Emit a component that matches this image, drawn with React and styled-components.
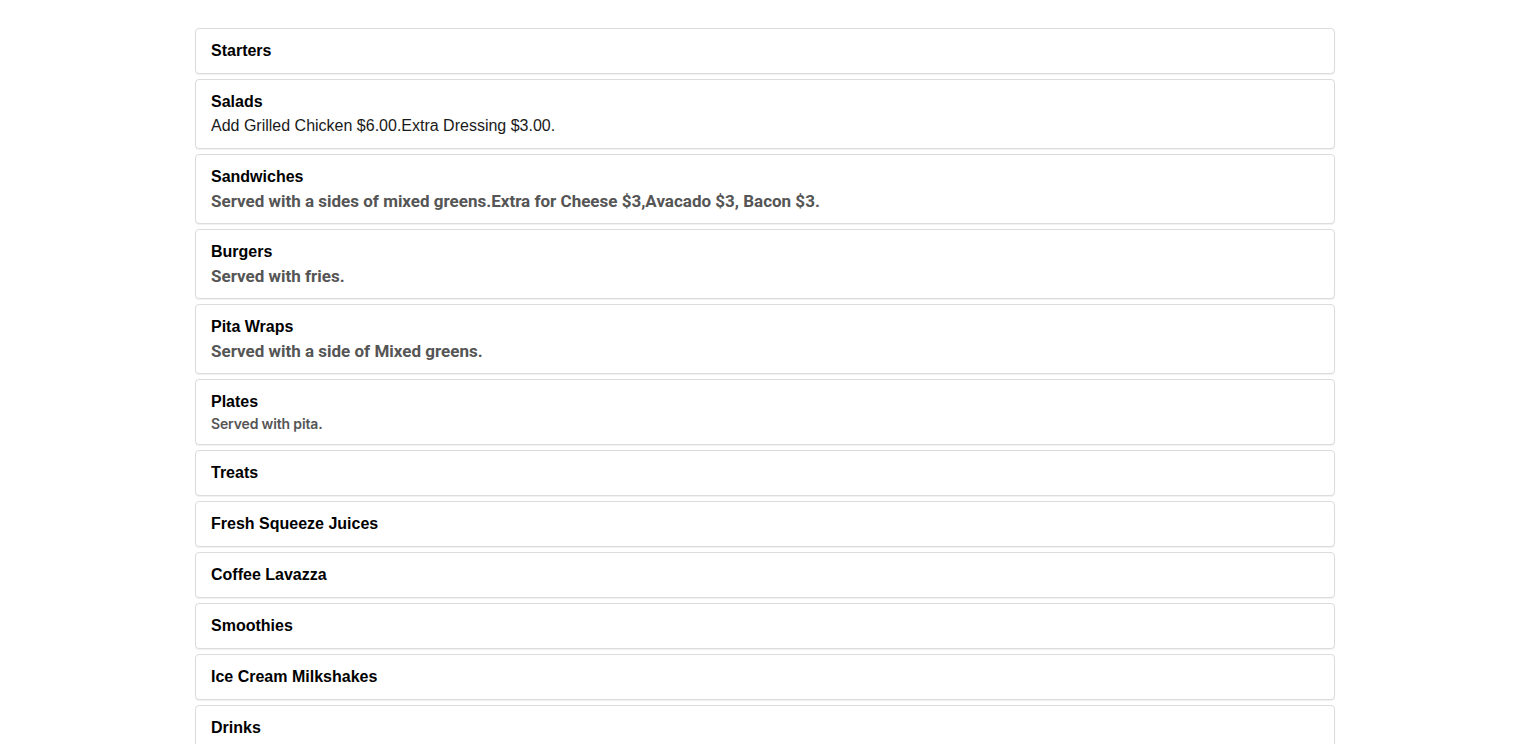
import React from "react";
import styled, { createGlobalStyle } from "styled-components";

const GlobalStyle = createGlobalStyle`
  body {
    margin: 0;
    background: #fff;
    font-family: "Liberation Sans", Arial, sans-serif;
    color: #000;
  }
`;

const menu = [
  { title: "Starters" },
  { title: "Salads", note: "Add Grilled Chicken $6.00.Extra Dressing $3.00.", kind: "plain" },
  {
    title: "Sandwiches",
    note: "Served with a sides of mixed greens.Extra for Cheese $3,Avacado $3, Bacon $3.",
    kind: "bold",
  },
  { title: "Burgers", note: "Served with fries.", kind: "bold" },
  { title: "Pita Wraps", note: "Served with a side of Mixed greens.", kind: "bold" },
  { title: "Plates", note: "Served with pita.", kind: "small" },
  { title: "Treats" },
  { title: "Fresh Squeeze Juices" },
  { title: "Coffee Lavazza" },
  { title: "Smoothies" },
  { title: "Ice Cream Milkshakes" },
  { title: "Drinks" },
];

const Container = styled.main`
  width: 1140px;
  margin: 0 auto;
  padding-top: 28px;
  display: flex;
  flex-direction: column;
  gap: 5px;
`;

const Card = styled.section`
  border: 1px solid #dcdcdc;
  border-radius: 4px;
  box-shadow: 0 1px 1px rgba(0, 0, 0, 0.06);
  padding: 10px 15px;
  background: #fff;
`;

const Title = styled.h3`
  margin: 0;
  font-size: 16px;
  line-height: 24px;
  font-weight: 700;
  color: #000;
`;

const Note = styled.p`
  margin: 0;
  ${({ $kind }) =>
    $kind === "bold"
      ? `
    font-family: Roboto, "Liberation Sans", sans-serif;
    font-weight: 700;
    font-size: 17px;
    line-height: 24px;
    color: #555;
  `
      : $kind === "small"
      ? `
    font-family: Inter, "Liberation Sans", sans-serif;
    font-weight: 600;
    font-size: 14px;
    letter-spacing: -0.15px;
    line-height: 20px;
    color: #555;
  `
      : `
    font-size: 16px;
    line-height: 24px;
    color: #1a1a1a;
  `}
`;

const App = () => (
  <>
    <GlobalStyle />
    <Container>
      {menu.map((item) => (
        <Card key={item.title}>
          <Title>{item.title}</Title>
          {item.note && <Note $kind={item.kind}>{item.note}</Note>}
        </Card>
      ))}
    </Container>
  </>
);

export default App;
